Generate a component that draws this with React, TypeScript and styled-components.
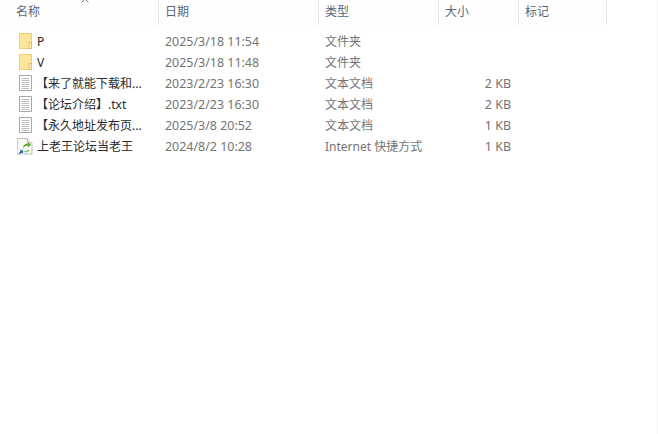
import React from "react";
import styled, { createGlobalStyle } from "styled-components";

const Global = createGlobalStyle`
  html, body { margin: 0; padding: 0; background: #fff; }
  body { font-family: "Noto Sans", "Noto Sans CJK SC", sans-serif; }
`;

const COLUMNS = "159px 160px 120px 80px 88px";

const Window = styled.div`
  width: 658px;
  height: 434px;
  box-sizing: border-box;
  overflow: hidden;
  position: relative;
  background: #fff;
  border-right: 1px solid #f4f4f4;
  padding-right: 5px;
`;

const SortArrow = styled.svg`
  position: absolute;
  left: 81px;
  top: -1px;
`;

const Header = styled.div`
  display: grid;
  grid-template-columns: ${COLUMNS};
  height: 25px;
  margin-bottom: 6px;
`;

const HeaderCell = styled.div<{ $first?: boolean }>`
  box-sizing: border-box;
  height: 25px;
  line-height: 23px;
  padding-left: ${(p) => (p.$first ? 16 : 6)}px;
  font-size: 12px;
  color: #5a6675;
  border-right: 1px solid #e8e8e8;
  background: linear-gradient(#ffffff, #fdfdfd);
`;

const Row = styled.div`
  display: grid;
  grid-template-columns: ${COLUMNS};
  height: 21px;
  line-height: 21px;
  align-items: center;
  font-size: 12px;
  color: #747474;
`;

const NameCell = styled.div`
  display: flex;
  align-items: center;
  padding-left: 17px;
  min-width: 0;
  color: #2a2a2a;
`;

const IconBox = styled.svg`
  flex: none;
  width: 16px;
  height: 17px;
  margin-right: 4px;
`;

const NameText = styled.span<{ $bracket?: boolean }>`
  white-space: nowrap;
  margin-left: ${(p) => (p.$bracket ? "-1px" : "0")};
`;

const DateCell = styled.div`
  padding-left: 6px;
  font-size: 12.45px;
  white-space: nowrap;
`;

const TypeCell = styled.div`
  padding-left: 6px;
  white-space: nowrap;
`;

const SizeCell = styled.div`
  text-align: right;
  padding-right: 8px;
  font-size: 12.45px;
`;

const FolderIcon = () => (
  <IconBox viewBox="0 0 16 17">
    <rect x="2.5" y="0.5" width="12" height="15" fill="#fde69a" stroke="#efcf7c" />
    <rect x="12" y="9.5" width="2.5" height="6" fill="#fff0b8" stroke="#e3bd66" />
  </IconBox>
);

const TextIcon = () => (
  <IconBox viewBox="0 0 16 17">
    <path d="M2.5.5h12v15h-12z" fill="#fff" stroke="#a6a6a6" />
    <path d="M4.500 3.500h8M4.500 5.500h8M4.500 7.500h8M4.500 9.500h8M4.500 11.500h8M4.500 13.500h8" stroke="#bdbdbd" />
  </IconBox>
);

const LinkIcon = () => (
  <IconBox viewBox="0 0 16 17">
    <path d="M0.500.5h10l4.500 4.500v11h-15z" fill="#fbfbfb" stroke="#bcbcbc" />
    <path d="M10.500.5v4.500h4.500" fill="#eee" stroke="#bcbcbc" />
    <path d="M6 10c0-3 2-4.500 5-4.500v-1.500l3 2.700-3 2.800v-1.800c-2 0-3.500.6-5 2.300z" fill="#5cab37" />
    <path d="M7 13a3.500 3.500 0 0 0 5-1" fill="none" stroke="#8cc25c" strokeWidth="1.500" />
    <rect x="0.500" y="11" width="6.500" height="5.500" fill="#fff" stroke="#cfcfcf" strokeWidth="0.500" />
    <path d="M2 16l3-3M3 12.800h2.400v2.400" fill="none" stroke="#2a5fb0" strokeWidth="1.300" />
  </IconBox>
);

const icons = { folder: FolderIcon, text: TextIcon, link: LinkIcon };

const rows = [
  { icon: "folder", name: "P", date: "2025/3/18 11:54", type: "文件夹", size: "" },
  { icon: "folder", name: "V", date: "2025/3/18 11:48", type: "文件夹", size: "" },
  { icon: "text", name: "【来了就能下载和...", date: "2023/2/23 16:30", type: "文本文档", size: "2 KB", bracket: true },
  { icon: "text", name: "【论坛介绍】.txt", date: "2023/2/23 16:30", type: "文本文档", size: "2 KB", bracket: true },
  { icon: "text", name: "【永久地址发布页...", date: "2025/3/8 20:52", type: "文本文档", size: "1 KB", bracket: true },
  { icon: "link", name: "上老王论坛当老王", date: "2024/8/2 10:28", type: "Internet 快捷方式", size: "1 KB" },
] as const;

export default function App() {
  return (
    <Window>
      <Global />
      <SortArrow width="8" height="4" viewBox="0 0 8 4">
        <path d="M0.500 3.500L4 0L7.500 3.500" fill="none" stroke="#7f858c" />
      </SortArrow>
      <Header>
        <HeaderCell $first>名称</HeaderCell>
        <HeaderCell>日期</HeaderCell>
        <HeaderCell>类型</HeaderCell>
        <HeaderCell>大小</HeaderCell>
        <HeaderCell>标记</HeaderCell>
      </Header>
      {rows.map((r) => {
        const Icon = icons[r.icon];
        return (
          <Row key={r.name}>
            <NameCell>
              <Icon />
              <NameText $bracket={"bracket" in r}>{r.name}</NameText>
            </NameCell>
            <DateCell>{r.date}</DateCell>
            <TypeCell>{r.type}</TypeCell>
            <SizeCell>{r.size}</SizeCell>
          </Row>
        );
      })}
    </Window>
  );
}
